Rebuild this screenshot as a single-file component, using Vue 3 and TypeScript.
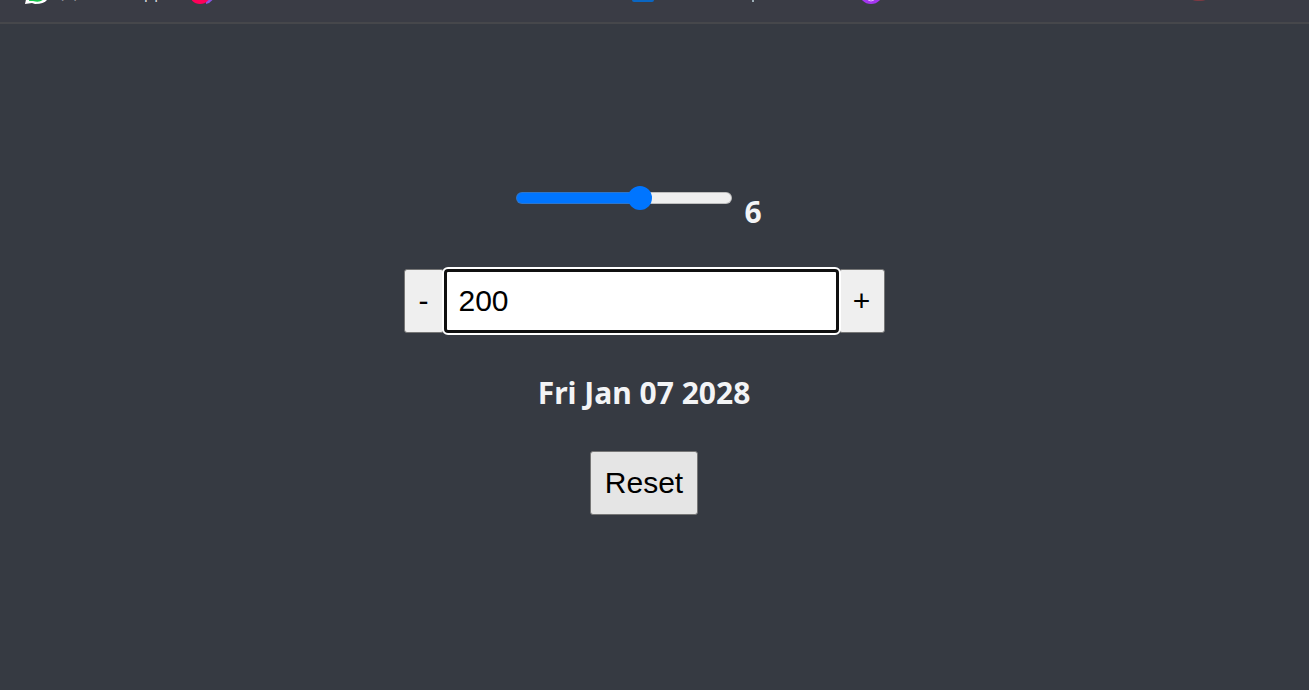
<script setup lang="ts">
import { computed, ref } from 'vue'

const minStep = -1
const maxStep = 11
const step = ref(6)
const count = ref(200)
const start = new Date(2028, 0, 7)
const initialCount = 200

const fill = computed(() => `${((step.value - minStep) / (maxStep - minStep)) * 100}%`)

const dateText = computed(() => {
  const date = new Date(start)
  date.setDate(date.getDate() + count.value - initialCount)
  return date.toDateString()
})

function reset() {
  step.value = 6
  count.value = initialCount
}
</script>

<template>
  <div class="page">
    <nav class="bookmarks" aria-label="Bookmarks">
      <a class="bookmark chat" href="#" aria-label="WhatsApp">
        <svg width="24" height="24" viewBox="0 0 24 24">
          <path d="M0 24 2 15A11.500 11.500 0 1 1 22 20Q19 24 10 24L7 23Z" fill="#fff" />
          <path d="M4 21 5 16A9.500 9.500 0 1 1 19 19Q15 23 8 21Z" fill="#16c74b" />
        </svg>
        <span class="label">(1) WhatsApp</span>
      </a>
      <a class="bookmark duo" href="#" aria-label="Bookmark">
        <svg width="24" height="24" viewBox="0 0 24 24">
          <path d="M14 24q8-2 10-12H14z" fill="#8954df" />
          <circle cx="8" cy="13" r="11" fill="#ff0059" />
        </svg>
      </a>
      <a class="bookmark square" href="#" aria-label="Bookmark">
        <svg width="22" height="22" viewBox="0 0 22 22">
          <rect width="22" height="22" rx="2" fill="#0a66c2" />
        </svg>
        <i class="mark"></i>
      </a>
      <a class="bookmark round" href="#" aria-label="Bookmark">
        <svg width="24" height="24" viewBox="0 0 24 24">
          <circle cx="12" cy="12" r="12" fill="#a435f0" />
          <path d="M9 20q3 2 6 0" fill="none" stroke="#dfb3ff" stroke-width="1" />
        </svg>
      </a>
      <a class="bookmark red" href="#" aria-label="Bookmark">
        <svg width="24" height="24" viewBox="0 0 24 24">
          <rect width="24" height="24" rx="10" fill="#7c3a42" />
        </svg>
      </a>
    </nav>

    <main class="counter">
      <div class="step">
        <input v-model.number="step" class="slider" type="range" :min="minStep" :max="maxStep" aria-label="Step"
          :style="{ '--fill': fill }" />
        <output class="value">{{ step }}</output>
      </div>
      <div class="stepper">
        <button class="minus" type="button" @click="count -= step">-</button>
        <input v-model.number="count" class="count" type="text" aria-label="Days" />
        <button class="plus" type="button" @click="count += step">+</button>
      </div>
      <p class="date">{{ dateText }}</p>
      <button class="reset" type="button" @click="reset">Reset</button>
    </main>
  </div>
</template>

<style>
body {
  background: #363a42;
}
</style>

<style scoped>
.page {
  box-sizing: border-box;
  min-height: 100vh;
  background: #363a42;
  color: #f3f4f6;
}
.bookmarks {
  display: flex;
  align-items: flex-start;
  box-sizing: border-box;
  height: 24px;
  padding-left: 25px;
  overflow: hidden;
  border-bottom: 2px solid #46474b;
  background: #3a3c45;
}
.bookmark {
  display: flex;
  flex: none;
  align-items: flex-start;
  margin-top: -20px;
  color: #d8d9dd;
  text-decoration: none;
}
.chat {
  width: 167px;
  gap: 10px;
}
.duo {
  width: 440px;
}
.square {
  width: 227px;
}
.round {
  width: 328px;
}
.red {
  margin-top: -23px;
}
.label {
  font: 17px/24px "Open Sans", "Noto Sans", sans-serif;
}
.mark {
  width: 2px;
  height: 22px;
  margin-left: 98px;
  background: #9fb0b8;
}
.counter {
  display: flex;
  flex-direction: column;
  align-items: center;
  padding: 162px 21px 0 0;
}
.step {
  display: flex;
  align-items: flex-start;
  gap: 12px;
  margin-right: 10px;
}
.slider {
  appearance: none;
  width: 216px;
  height: 24px;
  margin: 0;
  background: transparent;
}
.slider::-webkit-slider-runnable-track {
  box-sizing: border-box;
  height: 12px;
  border: 1px solid rgb(118 118 118 / 40%);
  border-radius: 6px;
  background: linear-gradient(to right, #0075ff var(--fill), #efefef var(--fill)) border-box;
}
.slider::-webkit-slider-thumb {
  appearance: none;
  width: 24px;
  height: 24px;
  margin-top: -7px;
  border-radius: 50%;
  background: #0075ff;
}
.value,
.date {
  margin: 0;
  font: bold 30px/40px "Noto Sans", "Open Sans", sans-serif;
}
.value {
  margin-top: 6px;
}
.stepper {
  display: flex;
  height: 64px;
  margin-top: 37px;
}
button,
.count {
  box-sizing: border-box;
  margin: 0;
  padding: 0;
  border: 1px solid #767676;
  border-radius: 3px;
  color: #000;
  font: 30px/36px "Liberation Sans", Arial, sans-serif;
}
button {
  background: #efefef;
}
.minus {
  width: 40px;
}
.plus {
  width: 46px;
}
.count {
  position: relative;
  width: 395px;
  padding: 0 12px;
  border: 3px solid #101010;
  border-radius: 4px;
  outline: 2px solid #fff;
  background: #fff;
}
.date {
  margin-top: 40px;
}
.reset {
  width: 108px;
  height: 64px;
  margin-top: 38px;
  background: #e5e5e5;
}
</style>
